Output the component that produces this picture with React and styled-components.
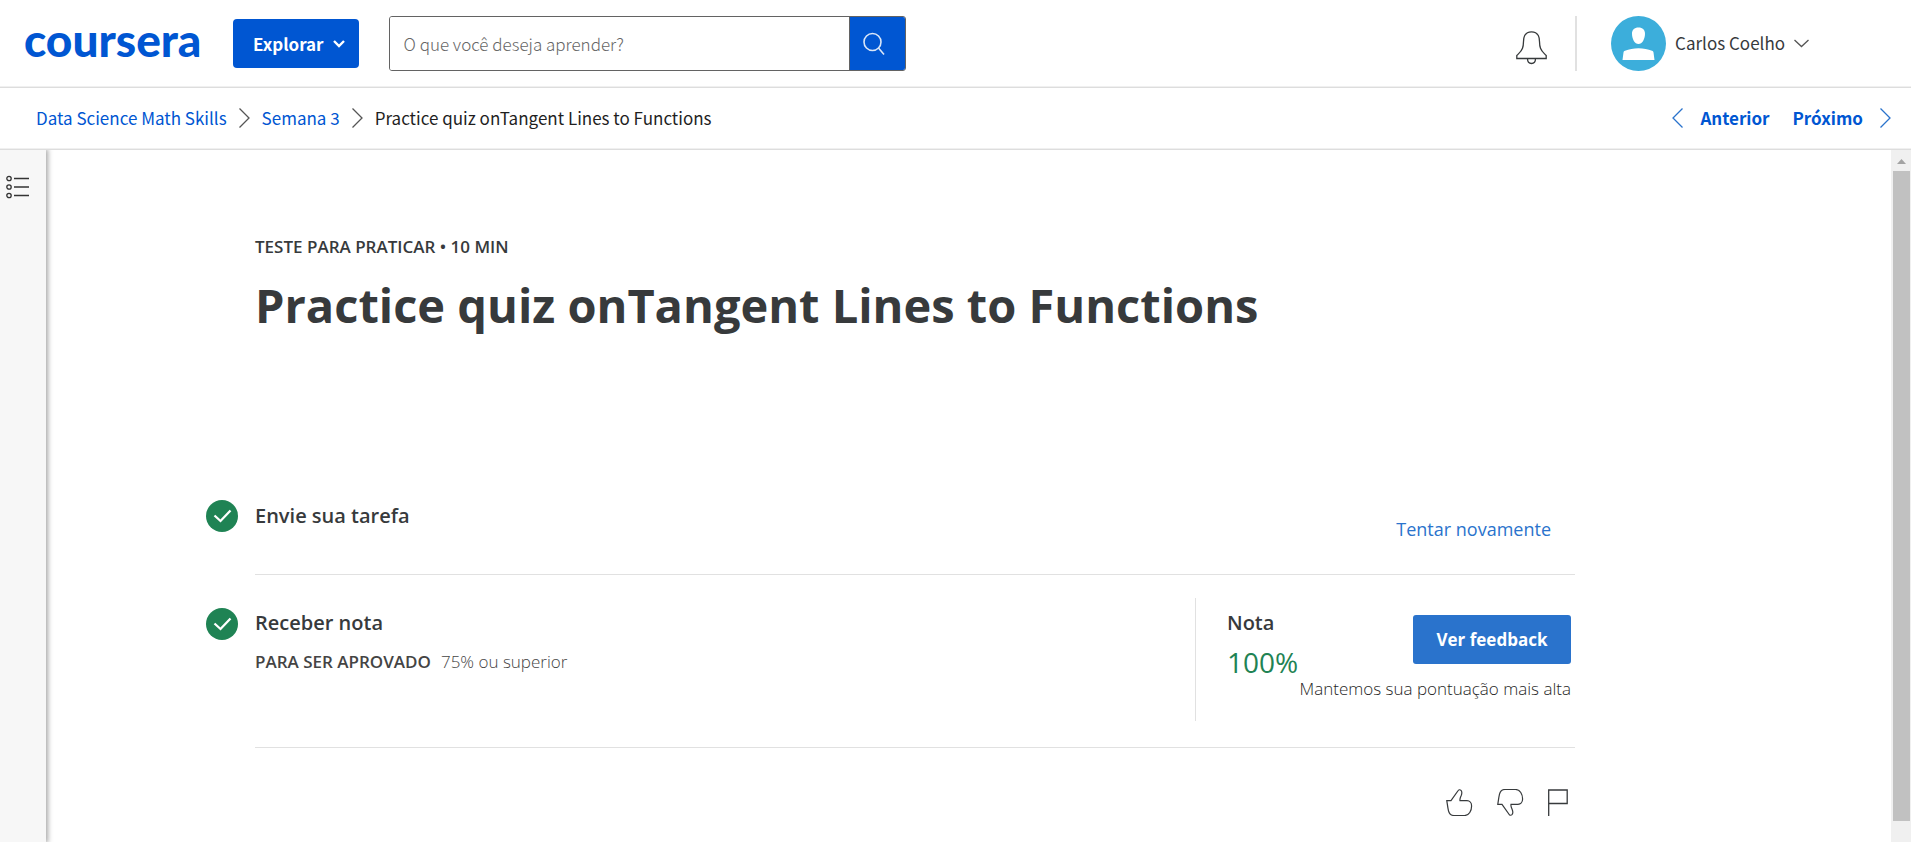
import React from "react";
import styled, { createGlobalStyle } from "styled-components";

const GlobalStyle = createGlobalStyle`
  *, *::before, *::after { box-sizing: border-box; }
  body { margin: 0; background: #fff; }
  button, input { font: inherit; }
  a { text-decoration: none; }
  svg { display: block; flex: none; }
`;

const sans = `"Open Sans", Arial, sans-serif`;
const source = `"Source Sans Pro", "Noto Sans CJK JP", Arial, sans-serif`;

const Page = styled.div`
  display: flex;
  flex-direction: column;
  height: 100vh;
  overflow: hidden;
  color: #373a3c;
  font-family: ${sans};
`;

const Bar = styled.div`
  display: flex;
  align-items: center;
  flex: none;
  border-bottom: 1px solid #ddd;
  box-shadow: inset 0 -1px 0 #f0f0f0;
  font-family: ${source};
  font-size: 17px;
  line-height: 24px;
`;

const Header = styled(Bar).attrs({ as: "header" })`
  height: 88px;
  padding: 0 102px 0 24px;
`;

const Logo = styled.a`
  width: 180px;
  margin-right: 29px;
  color: #0056d2;
  font-family: Lato, sans-serif;
  font-weight: 900;
  font-size: 46px;
  line-height: 56px;
  padding-bottom: 8px;
`;

const ExploreButton = styled.button`
  display: flex;
  align-items: center;
  gap: 8px;
  height: 49px;
  padding: 0 13px 0 20px;
  border: 0;
  border-radius: 4px;
  background: #0056d2;
  color: #fff;
  font-weight: 700;
`;

const SearchForm = styled.form`
  display: flex;
  width: 517px;
  height: 55px;
  margin-left: 30px;
  border: 1px solid #636363;
  border-radius: 3px;
  overflow: hidden;
`;

const SearchInput = styled.input`
  flex: 1;
  min-width: 0;
  padding: 0 14px;
  border: 0;
  outline: 0;
  color: #373a3c;
  font-weight: 300;
  &::placeholder { color: #666; opacity: 1; }
`;

const SearchButton = styled.button`
  display: flex;
  align-items: center;
  justify-content: center;
  width: 56px;
  padding: 0 6px 0 0;
  border: 0;
  border-left: 1px solid #636363;
  background: #0056d2;
`;

const Account = styled.div`
  display: flex;
  align-items: center;
  margin-left: auto;
`;

const PlainButton = styled.button`
  display: flex;
  align-items: center;
  padding: 0;
  border: 0;
  background: none;
  color: inherit;
`;

const BellButton = styled(PlainButton)`
  padding: 8px 28px 0 0;
`;

const UserButton = styled(PlainButton)`
  gap: 9px;
  margin-left: 34px;
`;

const UserName = styled.span`
  padding-bottom: 2px;
`;

const HeaderRule = styled.span`
  width: 2px;
  height: 55px;
  background: #e1e1e1;
`;

const SubHeader = styled(Bar)`
  justify-content: space-between;
  height: 62px;
  padding: 0 20px 2px 36px;
`;

const Crumbs = styled.nav`
  display: flex;
  align-items: center;
  gap: 12px;
  color: #1f1f1f;
  a { color: #0056d2; }
`;

const Pager = styled.nav`
  display: flex;
  align-items: center;
  gap: 23px;
  a {
    display: flex;
    align-items: center;
    gap: 17px;
    color: #0056d2;
    font-weight: 700;
  }
`;

const Body = styled.div`
  display: flex;
  flex: 1;
  min-height: 0;
`;

const Rail = styled.aside`
  flex: none;
  width: 46px;
  padding: 25px 0 0 6px;
  background: #f7f7f7;
  box-shadow: 1px 0 5px 1px rgba(0, 0, 0, 0.35);
  clip-path: inset(0 -12px 0 0);
`;

const Main = styled.main`
  flex: 1;
  min-width: 0;
  overflow: hidden;
  padding: 85px 316px 0 209px;
`;

const Eyebrow = styled.p`
  margin: 0;
  font-size: 17px;
  font-weight: 600;
  line-height: 24px;
`;

const Title = styled.h1`
  margin: 16px 0 0;
  font-size: 47px;
  font-weight: 700;
  line-height: 60px;
`;

const Steps = styled.ul`
  margin: 144px 0 0;
  padding: 0;
  list-style: none;
`;

const Step = styled.li`
  display: flex;
  align-items: flex-start;
  justify-content: space-between;
  height: ${(p) => p.$height}px;
  margin-left: -49px;
`;

const StepIcon = styled.span`
  flex: none;
  width: 49px;
  padding-top: ${(p) => p.$top}px;
`;

const StepContent = styled.div`
  display: flex;
  justify-content: space-between;
  align-items: flex-start;
  flex: 1;
  height: 100%;
  border-bottom: 1px solid #e1e1e1;
`;

const StepText = styled.div`
  padding-top: ${(p) => p.$top}px;
`;

const StepTitle = styled.h2`
  margin: 0;
  font-size: 20px;
  font-weight: 600;
  line-height: 28px;
`;

const Requirement = styled.p`
  margin: 13px 0 0;
  color: #444;
  font-size: 17px;
  line-height: 24px;
  font-weight: 300;
  strong { margin-right: 10px; font-weight: 600; }
`;

const RetryButton = styled(PlainButton)`
  margin: 36px 24px 0 0;
  color: #2a73cc;
  font-size: 18px;
  line-height: 28px;
  font-weight: 500;
`;

const Grade = styled.div`
  display: flex;
  justify-content: space-between;
  width: 380px;
  height: 123px;
  margin-top: 23px;
  padding: 11px 4px 0 31px;
  border-left: 1px solid #e1e1e1;
`;

const Score = styled.div`
  color: #1f8354;
  font-size: 28px;
  line-height: 36px;
  margin-top: 7px;
`;

const Feedback = styled.div`
  display: flex;
  flex-direction: column;
  align-items: flex-end;
  padding-top: 6px;
  color: #1f1f1f;
  font-size: 17px;
  font-weight: 300;
  line-height: 24px;
  white-space: nowrap;
`;

const FeedbackButton = styled.button`
  width: 158px;
  height: 49px;
  margin-bottom: 13px;
  border: 0;
  border-radius: 3px;
  background: #2a73cc;
  color: #fff;
  font-size: 17px;
  font-weight: 700;
`;

const Reactions = styled.div`
  display: flex;
  justify-content: flex-end;
  gap: 24px;
  padding: 41px 6px 0 0;
`;

const ScrollTrack = styled.div`
  display: flex;
  flex-direction: column;
  align-items: center;
  gap: 7px;
  flex: none;
  width: 20px;
  padding: 9px 0 21px 1px;
  background: #f0f0f0;
`;

const ScrollThumb = styled.div`
  flex: 1;
  width: 17px;
  background: #c1c1c1;
`;

const Chevron = ({ left, color = "#555" }) => (
  <svg width="11" height="20" viewBox="0 0 11 20" fill="none" stroke={color} strokeWidth="1.3">
    <path d={left ? "M10.5 .5 1 10l9.5 9.5" : "M.5 .5 10 10 .5 19.5"} />
  </svg>
);

const CheckBadge = () => (
  <svg width="32" height="32" viewBox="0 0 32 32" fill="none">
    <circle cx="16" cy="16" r="16" fill="#1f8354" />
    <path d="m8.5 15.5 6 5.5L24.5 10.5" stroke="#fff" strokeWidth="2.3" />
  </svg>
);

const thumb = "M.8 11.7H5L12 1.8C12.6.6 14 .4 15 1.4c1.3 1.4 1 3.3 0 5.6-.8 1.7-1.4 3-1 4.7h7c2.6 0 4.6 2.2 4.6 5.2 0 4.7-2.5 9.6-7 9.600H8c-3.2 0-4.8-2-5.5-4.7C1.8 19 1.3 15 .8 11.7Z";

const ThumbIcon = ({ down }) => (
  <svg width="27" height="27" viewBox="0 0 27 27" fill="none" stroke="#373a3c" strokeWidth="1.2">
    <path d={thumb} transform={down ? "matrix(1 0 0 -1 0 27)" : undefined} />
  </svg>
);

export default function App() {
  return (
    <Page>
      <GlobalStyle />
      <Header>
        <Logo href="#">coursera</Logo>
        <ExploreButton type="button">
          Explorar
          <svg width="14" height="10" viewBox="0 0 14 10" fill="none" stroke="#fff" strokeWidth="2.4">
            <path d="m2 2 5 5 5-5" />
          </svg>
        </ExploreButton>
        <SearchForm>
          <SearchInput type="text" aria-label="Pesquisar" placeholder="O que você deseja aprender?" />
          <SearchButton type="button" aria-label="Pesquisar">
            <svg width="22" height="24" viewBox="0 0 22 24" fill="none" stroke="#d9e6f8" strokeWidth="1.6">
              <circle cx="9.5" cy="10" r="8.5" />
              <path d="M15.5 16 21 22.5" />
            </svg>
          </SearchButton>
        </SearchForm>
        <Account>
          <BellButton type="button" aria-label="Notificações">
            <svg width="31" height="34" viewBox="0 0 31 34" fill="none" stroke="#373a3c" strokeWidth="1.3">
              <path d="M.8 27.5v-3c2-2.2 4.500-3.8 5.700-7.2C8.4 12 6.5 8.5 8.7 4.5 10.2 1.8 12.5.8 15.5.8s5.300 1 6.800 3.700c2.200 4 .3 7.500 2.200 12.800 1.200 3.400 3.700 5 5.700 7.200v3Z" />
              <path d="M11.5 27.5c0 3 1.5 5 4 5s4-2 4-5" />
            </svg>
          </BellButton>
          <HeaderRule />
          <UserButton type="button">
            <svg width="55" height="55" viewBox="0 0 55 55">
              <circle cx="27.5" cy="27.5" r="27.5" fill="#3caedb" />
              <path fill="#fff" d="M27.5 11.5c4.2 0 6.5 2.5 6.5 6.2 0 5.3-2.8 10.3-6.5 10.3S21 23 21 17.7c0-3.7 2.3-6.2 6.5-6.2ZM11.5 44l1-7.500c.2-1 .7-1.4 1.5-1.7 4-1.4 8.5-2.6 13.5-2.6s9.500 1.200 13.500 2.600c.8.3 1.300.7 1.500 1.700l1 7.500Z" />
            </svg>
            <UserName>Carlos Coelho</UserName>
            <svg width="15" height="9" viewBox="0 0 15 9" fill="none" stroke="#555" strokeWidth="1.3">
              <path d="m.5 1 7 6.5 7-6.5" />
            </svg>
          </UserButton>
        </Account>
      </Header>

      <SubHeader>
        <Crumbs aria-label="Navegação">
          <a href="#">Data Science Math Skills</a>
          <Chevron />
          <a href="#">Semana 3</a>
          <Chevron />
          <span>Practice quiz onTangent Lines to Functions</span>
        </Crumbs>
        <Pager aria-label="Itens">
          <a href="#"><Chevron left color="#2a73cc" />Anterior</a>
          <a href="#">Próximo<Chevron color="#2a73cc" /></a>
        </Pager>
      </SubHeader>

      <Body>
        <Rail>
          <PlainButton type="button" aria-label="Menu do curso">
            <svg width="24" height="24" viewBox="0 0 24 24" fill="none" stroke="#333" strokeWidth="1.3">
              <circle cx="3" cy="3.5" r="2.2" />
              <circle cx="3" cy="12" r="2.2" />
              <circle cx="3" cy="20.5" r="2.2" />
              <path d="M8 3.5h15M8 12h15M8 20.5h15" />
            </svg>
          </PlainButton>
        </Rail>
        <Main>
          <Eyebrow>TESTE PARA PRATICAR • 10 MIN</Eyebrow>
          <Title>Practice quiz onTangent Lines to Functions</Title>
          <Steps>
            <Step $height={96}>
              <StepIcon $top={21}><CheckBadge /></StepIcon>
              <StepContent>
                <StepText $top={23}>
                  <StepTitle>Envie sua tarefa</StepTitle>
                </StepText>
                <RetryButton type="button">Tentar novamente</RetryButton>
              </StepContent>
            </Step>
            <Step $height={173}>
              <StepIcon $top={33}><CheckBadge /></StepIcon>
              <StepContent>
                <StepText $top={34}>
                  <StepTitle>Receber nota</StepTitle>
                  <Requirement><strong>PARA SER APROVADO</strong>75% ou superior</Requirement>
                </StepText>
                <Grade>
                  <div>
                    <StepTitle as="h3">Nota</StepTitle>
                    <Score>100%</Score>
                  </div>
                  <Feedback>
                    <FeedbackButton type="button">Ver feedback</FeedbackButton>
                    Mantemos sua pontuação mais alta
                  </Feedback>
                </Grade>
              </StepContent>
            </Step>
          </Steps>
          <Reactions>
            <PlainButton type="button" aria-label="Gostei"><ThumbIcon /></PlainButton>
            <PlainButton type="button" aria-label="Não gostei"><ThumbIcon down /></PlainButton>
            <PlainButton type="button" aria-label="Denunciar">
              <svg width="21" height="27" viewBox="0 0 21 27" fill="none" stroke="#373a3c" strokeWidth="1.3">
                <path d="M.7 27V1h18.500v13.500H.7" />
              </svg>
            </PlainButton>
          </Reactions>
        </Main>
        <ScrollTrack aria-hidden="true">
          <svg width="9" height="5" viewBox="0 0 9 5"><path d="M0 5 4.5 0 9 5Z" fill="#a3a3a3" /></svg>
          <ScrollThumb />
        </ScrollTrack>
      </Body>
    </Page>
  );
}
